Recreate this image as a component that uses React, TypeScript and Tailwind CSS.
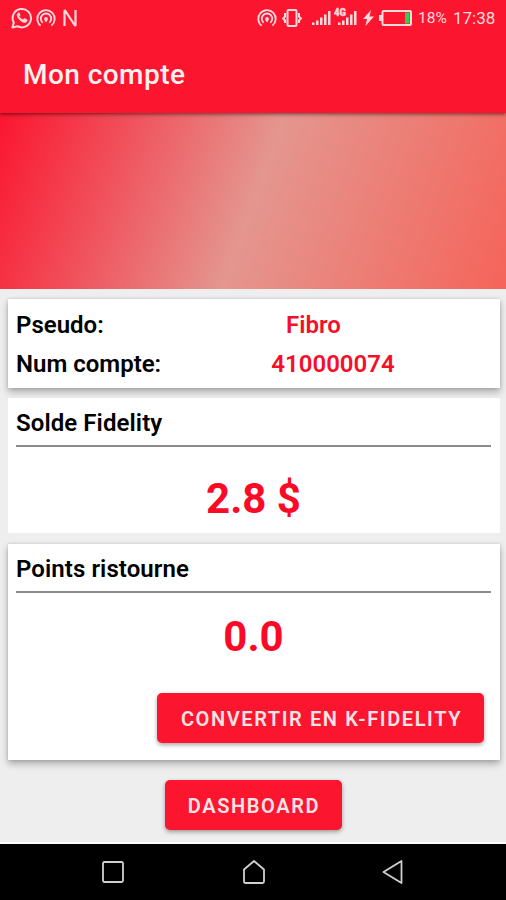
import type { ReactNode } from 'react';
import clsx from 'clsx';

function WhatsappIcon() {
  return (
    <svg className="w-[22px] h-[22px]" viewBox="0 0 22 22" fill="none">
      <path
        d="M1.4 20.6 2.8 15.6A9.2 9.2 0 1 1 6.4 19.2Z"
        stroke="currentColor"
        strokeWidth="2"
        strokeLinejoin="round"
      />
      <path
        d="M7.6 5.8c-1.6.8-1.8 2.4-.9 4.2 1.2 2.5 3 4.2 5.4 5.2 1.9.8 3.6.2 4-1.7.1-.5 0-.7-.4-.9l-2-1c-.4-.2-.7-.1-1 .3l-.7.9c-1.8-.7-3-1.8-3.9-3.4l.8-1c.2-.3.2-.5.1-.8l-.8-1.7c-.1-.2-.3-.3-.6-.1Z"
        fill="currentColor"
        stroke="currentColor"
        strokeWidth="0.6"
      />
    </svg>
  );
}

function HotspotIcon() {
  return (
    <svg className="w-[20px] h-[18px]" viewBox="0 0 20 18" fill="none" stroke="currentColor" strokeWidth="1.8">
      <path d="M4.6 16.6A8.7 8.7 0 1 1 15.4 16.6" />
      <path d="M6.7 13.7A5.2 5.2 0 1 1 13.3 13.7" />
      <path d="M10 10v3" strokeWidth="1.5" />
      <circle cx="10" cy="10" r="1.9" fill="currentColor" stroke="none" />
    </svg>
  );
}

function NfcIcon() {
  return (
    <svg className="w-[14px] h-[18px]" viewBox="0 0 14 18" fill="none">
      <path d="M1.5 17V1.5h.6L11.900 16.500h.6V1" stroke="currentColor" strokeWidth="2.2" strokeLinejoin="bevel" />
    </svg>
  );
}

function VibrateIcon() {
  return (
    <svg className="w-[20px] h-[18px]" viewBox="0 0 20 18" fill="none" stroke="currentColor">
      <rect x="5.5" y="1" width="9" height="16" rx="1.2" strokeWidth="2" />
      <path d="M3 4v3.5L1.2 9.5 3 11.5V14M17 4v3.5l1.8 2L17 11.5V14" strokeWidth="2" />
    </svg>
  );
}

function SignalIcon({ network }: { network?: boolean }) {
  return (
    <svg
      className={network ? 'w-[23px] h-[20px]' : 'w-[19px] h-[20px]'}
      viewBox={network ? '-4 0 23 20' : '0 0 19 20'}
      fill="currentColor"
    >
      <path d="M0 16.5h2.5V19H0zM4 14.5h2.5V19H4zM8 11.5h2.5V19H8zM12 8.5h2.5V19H12zM16 5h2.5v14H16z" />
      {network && (
        <text
          x="-4"
          y="9.5"
          fontSize="10"
          fontWeight="900"
          fontFamily="Roboto, sans-serif"
          stroke="currentColor"
          strokeWidth="0.3"
          textLength="12"
          lengthAdjust="spacingAndGlyphs"
        >
          4G
        </text>
      )}
    </svg>
  );
}

function BoltIcon() {
  return (
    <svg className="w-[11px] h-[16px]" viewBox="0 0 11 16" fill="currentColor">
      <path d="M8 0 0 9h4L2.5 16 11 6.5H6.5Z" />
    </svg>
  );
}

function BatteryIcon() {
  return (
    <svg className="w-[33px] h-[16px]" viewBox="0 0 33 16" fill="none">
      <path d="M0 5h3v6H0z" fill="currentColor" />
      <rect x="3.5" y="1" width="28.5" height="14" rx="1.2" stroke="currentColor" strokeWidth="2" />
      <path d="M26 2.5h4.5v11H26z" fill="#2fd04b" />
    </svg>
  );
}

function StatusBar() {
  return (
    <div className="h-9 flex items-center px-[11px] text-[#ffdadd]">
      <WhatsappIcon />
      <div className="ml-[3px]">
        <HotspotIcon />
      </div>
      <div className="ml-[7px]">
        <NfcIcon />
      </div>
      <div className="ml-auto flex items-center">
        <HotspotIcon />
        <div className="ml-[5px] mr-[10px]">
          <VibrateIcon />
        </div>
        <div className="flex mr-[6px] gap-[3px] -mt-1">
          <SignalIcon />
          <SignalIcon network />
        </div>
        <BoltIcon />
        <div className="ml-[5px] mr-[6px]">
          <BatteryIcon />
        </div>
        <span className="w-[30px] pt-px text-[15.5px] whitespace-nowrap">18%</span>
        <span className="w-[42px] ml-[5px] pt-px text-[17px] whitespace-nowrap">17:38</span>
      </div>
    </div>
  );
}

function Card({ raised, className, children }: { raised?: boolean; className?: string; children: ReactNode }) {
  return (
    <section
      className={clsx(
        'ml-2 mr-1.5 pl-2 pr-[9px] bg-white',
        raised && 'shadow-[0_4px_7px_rgba(0,0,0,0.28),0_0_3px_rgba(0,0,0,0.15)]',
        className
      )}
    >
      {children}
    </section>
  );
}

function CardTitle({ children }: { children: ReactNode }) {
  return (
    <h2 className="h-[49px] pt-[9px] border-b-2 border-[#8c8c8c] text-[24px] leading-8 font-semibold tracking-[0.08px]">
      {children}
    </h2>
  );
}

function Button({ className, children }: { className?: string; children: ReactNode }) {
  return (
    <button
      className={clsx(
        'h-[50px] pt-0.5 pl-[2px] rounded-[5px] bg-[#fb152f] text-[#ffe4e6] text-[20px] font-semibold tracking-[1.6px] whitespace-nowrap shadow-[0_2px_4px_rgba(0,0,0,0.35)]',
        className
      )}
    >
      {children}
    </button>
  );
}

export default function App() {
  return (
    <div className="w-[506px] h-[900px] flex flex-col overflow-hidden bg-[#eeeeee] font-[Roboto,sans-serif] text-black">
      <header className="relative h-[113px] shrink-0 bg-[#fb152f] shadow-[0_1px_4px_rgba(0,0,0,0.6)]">
        <StatusBar />
        <h1 className="pl-[23px] pt-[19px] text-[28px] leading-10 font-medium tracking-[0.45px] text-[#fff0f0]">
          Mon compte
        </h1>
      </header>

      <div className="h-[176px] shrink-0 bg-[linear-gradient(110deg,#fb152f_0%,#e4968f_50%,#f5645a_100%)]" />

      <main className="grow flex flex-col">
        <Card raised className="mt-[10px] h-[89px] pt-[7px] text-[24px] font-semibold">
          <div className="grid grid-cols-[158px_1fr] leading-[39px]">
            <span>Pseudo:</span>
            <span className="text-center pr-[38px] text-[#f50f2a]">Fibro</span>
            <span className="whitespace-nowrap">Num compte:</span>
            <span className="text-center pl-px text-[#f50f2a]">410000074</span>
          </div>
        </Card>

        <Card className="mt-[10px] h-[135px]">
          <CardTitle>Solde Fidelity</CardTitle>
          <p className="pt-[27px] text-center text-[42px] leading-[50px] font-bold text-[#fb0a28]">2.8 $</p>
        </Card>

        <Card raised className="mt-[11px] h-[216px]">
          <CardTitle>Points ristourne</CardTitle>
          <p className="pt-[19px] text-center text-[42px] leading-[50px] font-bold text-[#fb0a28]">0.0</p>
          <div className="flex justify-end mt-[31px] mr-[7px]">
            <Button className="w-[327px]">CONVERTIR EN K-FIDELITY</Button>
          </div>
        </Card>

        <div className="flex justify-center mt-5">
          <Button className="w-[177px]">DASHBOARD</Button>
        </div>
      </main>

      <nav className="h-[58px] shrink-0 flex items-center bg-black border-t-2 border-white text-[#d0d0d0]">
        <svg className="w-[22px] h-[22px] ml-[102px]" viewBox="0 0 22 22" fill="none" stroke="currentColor" strokeWidth="1.8">
          <rect x="1" y="1" width="20" height="20" rx="1.5" />
        </svg>
        <svg className="w-[22px] h-[24px] ml-[119px]" viewBox="0 0 22 24" fill="none" stroke="currentColor" strokeWidth="1.8">
          <path d="M1 9.5 11 1l10 8.5V21.5q0 1.5-1.5 1.5h-17Q1 23 1 21.5Z" strokeLinejoin="round" />
        </svg>
        <svg className="w-[21px] h-[24px] ml-[117px]" viewBox="0 0 21 24" fill="none" stroke="currentColor" strokeWidth="1.8">
          <path d="M19.5 1v22L1.5 12Z" strokeLinejoin="round" />
        </svg>
      </nav>
    </div>
  );
}
